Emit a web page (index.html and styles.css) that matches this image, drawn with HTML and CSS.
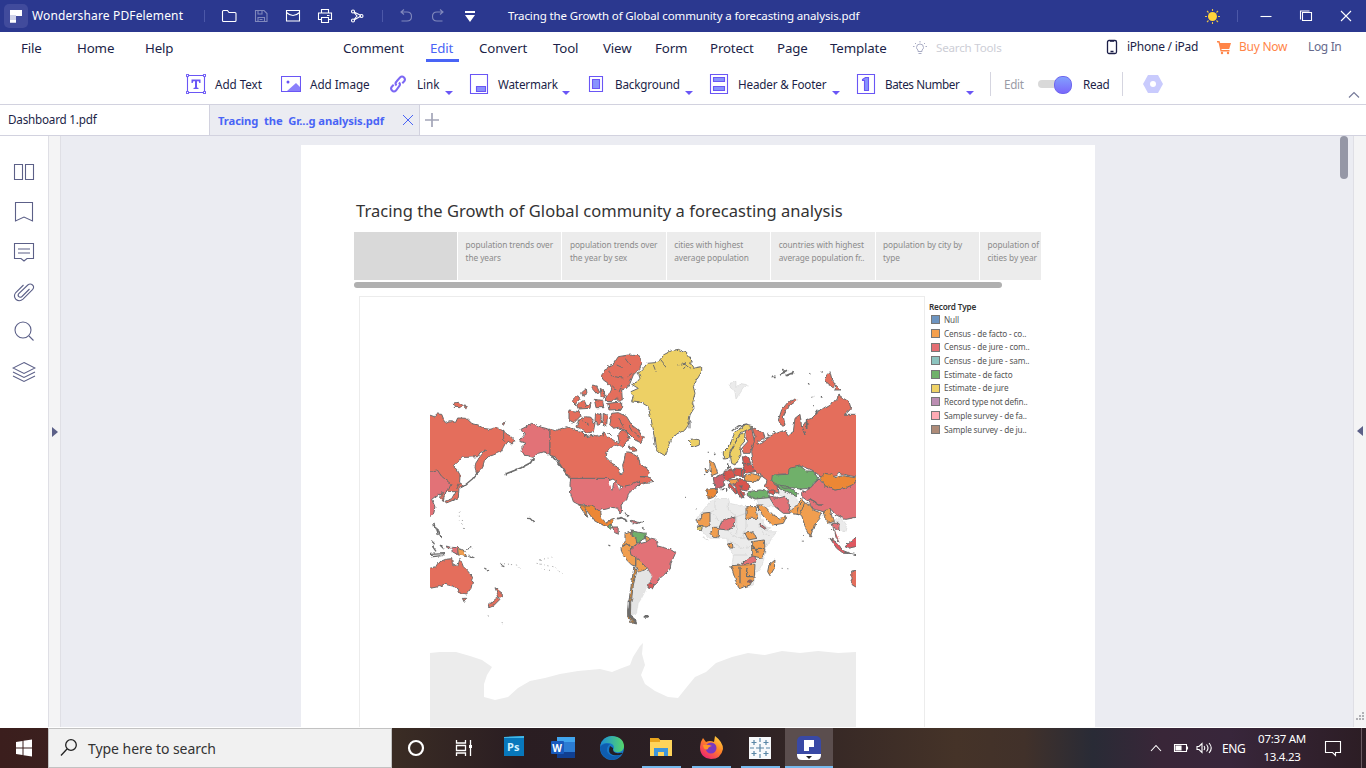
FILE: index.html
```html
<!DOCTYPE html>
<html lang="en">
<head>
<meta charset="utf-8">
<title>Wondershare PDFelement</title>
<link rel="stylesheet" href="styles.css">
</head>
<body>
<header class="titlebar">
  <svg class="logo" viewBox="0 0 24 24"><rect width="24" height="24" rx="5" fill="#414b9c"/><path d="M6 6h12v6H6z" fill="#fff"/><path d="M6 12h6v6.500H6z" fill="#fff"/><path d="M6 11h6v5H6z" fill="#cfd2e8"/><path d="M6 16h6v2.500H6z" fill="#fff"/></svg>
  <span class="brand">Wondershare PDFelement</span>
  <i class="sep"></i>
  <svg class="ti" viewBox="0 0 32 32"><path d="M9.500 11.500q0-1 1-1h4l1.500 2h6q1 0 1 1v7q0 1-1 1h-11.500q-1 0-1-1z"/></svg>
  <svg class="ti dim" viewBox="0 0 32 32"><path d="M10.500 10.500h8.500l3 3v8h-11.500zM13 10.500v3.500h4v-3.500M13 21.500v-4h6.500v4M14.500 19.500h3"/></svg>
  <svg class="ti" viewBox="0 0 32 32"><path d="M9.500 10.500h13v10.500h-13zM9.500 12.500q6.500 6 13 0"/></svg>
  <svg class="ti" viewBox="0 0 32 32"><path d="M12.500 13v-3.500h7V13M12 19.500H9.500v-6.500h13v6.500H20M12.500 17.500h7v5h-7zM18 15.500h2.500"/></svg>
  <svg class="ti" viewBox="0 0 32 32"><path d="M13 12l7 3.500M13 20l7-4M13 12.500l3 3.500-3 3.500"/><circle cx="12" cy="11.500" r="1.500"/><circle cx="12" cy="20.500" r="1.500"/><circle cx="20.500" cy="16" r="1.500"/></svg>
  <i class="sep s2"></i>
  <svg class="ti dim" viewBox="0 0 32 32"><path d="M14 9.500l-3 2.500 3 2.500M11 12h6q4.500 0 4.500 4.500t-4.500 4.500h-5.500"/></svg>
  <svg class="ti dim" viewBox="0 0 32 32"><path d="M18 9.500l3 2.500-3 2.500M21 12h-6q-4.500 0-4.500 4.500t4.500 4.500h5.500"/></svg>
  <svg class="ti" viewBox="0 0 32 32"><path d="M11 11h10v2H11zM11 15h10l-5 7z" fill="#fff" stroke="none"/></svg>
  <span class="doc">Tracing the Growth of Global community a forecasting analysis.pdf</span>
  <svg class="ti" viewBox="0 0 32 32"><circle cx="16.500" cy="16.500" r="4.500" fill="#ffd43b" stroke="none"/><path d="M16.500 9v2M16.500 22v2M9 16.500h2M22 16.500h2M11 11l1.500 1.500M22 11l-1.500 1.500M11 22l1.500-1.500M22 22l-1.500-1.500" stroke="#e8c24a"/></svg>
  <i class="sep s2"></i>
  <svg class="win" viewBox="0 0 40 32"><path d="M14.500 16.500h11"/></svg>
  <svg class="win" viewBox="0 0 40 32"><path d="M16.500 12.500h9v8h-9zM14.500 19.500v-8.500h9"/></svg>
  <svg class="win" viewBox="0 0 40 32"><path d="M15 11l10 10M25 11l-10 10"/></svg>
</header>

<nav class="menu">
  <span>File</span><span>Home</span><span>Help</span><span>Comment</span><span class="active">Edit</span><span>Convert</span><span>Tool</span><span>View</span><span>Form</span><span>Protect</span><span>Page</span><span>Template</span>
  <svg viewBox="0 0 16 16" class="bulb"><path d="M6 11.500V10q-1.500-1-1.500-2.500a3.500 3.500 0 0 1 7 0Q11.500 9 10 10v1.500zM6.500 13.500h3M8 1v1.500M3 3l1 1M13 3l-1 1M1 6.500h1.500M13.500 6.500H15"/></svg>
  <span class="search">Search Tools</span>
  <svg viewBox="0 0 12 16" class="phone"><rect x="1.500" y="1.500" width="9" height="13" rx="1.500"/><path d="M4 2h4M4.500 12.500h3"/></svg>
  <span class="small">iPhone / iPad</span>
  <svg viewBox="0 0 15 15" class="cart"><path d="M0 1h2.500l.7 2H14l-1.800 6H4.500v1h8v1.500H3.500L3 9 1.500 2.500H0z"/><circle cx="5" cy="13" r="1.200"/><circle cx="11" cy="13" r="1.200"/></svg>
  <span class="small buy">Buy Now</span>
  <span class="small login">Log In</span>
</nav>

<section class="tools">
  <svg viewBox="0 0 20 20" class="tool-icon"><path d="M1.500 1.500h17v17h-17z"/><path d="M5.500 5.500h9V9h-1.200l-.6-1.800H11v6.300l1.500.5v1h-5v-1l1.500-.5V7.200H7.300L6.700 9H5.500z" fill="#6a56f5" stroke="none"/><g fill="#fff"><circle cx="1.500" cy="1.500" r="1.200"/><circle cx="18.500" cy="1.500" r="1.200"/><circle cx="1.500" cy="18.500" r="1.200"/><circle cx="18.500" cy="18.500" r="1.200"/></g></svg>
  <span>Add Text</span>
  <svg viewBox="0 0 20 20" class="tool-icon"><path d="M.5 2.500h19v15H.5z"/><path d="M6 17l9-8 4 4v4z" fill="#8a80fb" stroke="none"/><circle cx="7" cy="8" r="1.500" fill="#6a56f5" stroke="none"/></svg>
  <span>Add Image</span>
  <svg viewBox="0 0 20 20" class="tool-icon link"><path d="M8.500 11.500q-2-2 0-4l3.500-4q2-2 4 0t0 4l-1.700 1.700M11 8.500q2 2 0 4l-3 4q-2 2-4 0t0-4l1.700-1.700"/></svg>
  <span>Link</span><b class="arrow"></b>
  <svg viewBox="0 0 20 20" class="tool-icon"><path d="M1.500.5h17v19h-17z"/><path d="M7.500 12.500h9v5h-9z" fill="#8a90fb"/></svg>
  <span class="tight">Watermark</span><b class="arrow"></b>
  <svg viewBox="0 0 20 20" class="tool-icon"><path d="M4.500 2.500h13v15h-13z"/><path d="M7.500 5.500h7v9h-7z" fill="#8793fd"/></svg>
  <span class="tight">Background</span><b class="arrow"></b>
  <svg viewBox="0 0 20 20" class="tool-icon"><path d="M1.500.5h17v19h-17z"/><path d="M4.500 3.500h11v4h-11zM4.500 12.500h11v4h-11z" fill="#8793fd"/></svg>
  <span class="tight">Header &amp; Footer</span><b class="arrow"></b>
  <svg viewBox="0 0 20 20" class="tool-icon"><path d="M1.500.5h17v19h-17z"/><path d="M6.500 5.500l3-2h3v13h-4v-10h-2z" fill="#8793fd"/></svg>
  <span class="tighter">Bates Number</span><b class="arrow"></b>
  <i class="bar"></i>
  <span class="off">Edit</span>
  <span class="switch"></span>
  <span class="read">Read</span>
  <i class="bar"></i>
  <svg viewBox="0 0 20 20" class="hex"><path d="M5 1h10l5 9-5 9H5l-5-9z" fill="#c9cbfd"/><circle cx="10" cy="10" r="3" fill="#fff"/></svg>
  <svg viewBox="0 0 12 12" class="fold"><path d="M1 8.500l5-5 5 5"/></svg>
</section>

<section class="tabs">
  <div class="tab">Dashboard 1.pdf</div>
  <div class="tab current"><span>Tracing&nbsp; the&nbsp; Gr...g analysis.pdf</span><svg viewBox="0 0 12 12"><path d="M1 1l10 10M11 1L1 11"/></svg></div>
  <svg class="plus" viewBox="0 0 16 16"><path d="M8 1v14M1 8h14"/></svg>
</section>

<main class="work">
  <aside class="side">
    <svg viewBox="0 0 24 24"><path d="M2.500 4.500h8v15h-8zM13.500 4.500h8v15h-8z"/></svg>
    <svg viewBox="0 0 24 24"><path d="M3.500 2.500h17v18.500L12 17l-8.500 4z"/></svg>
    <svg viewBox="0 0 24 24"><path d="M2.500 3.500h19v15H15l-3 2.500-3-2.500H2.500zM6 9h12M6 13h12"/></svg>
    <svg viewBox="0 0 24 24"><path d="M17.500 9l-7.500 7.500q-1.800 1.500-3.200.2t0-3.200l9-8.500q2.500-2 4.700 0t0 4.700l-9.500 9.500q-3.500 3-7 .3-3-3.500-.2-7L11.500 5"/></svg>
    <svg viewBox="0 0 24 24"><circle cx="11" cy="10" r="8"/><path d="M17 16l4.500 4.500"/></svg>
    <svg viewBox="0 0 24 24"><path d="M12 2.500L23 8l-11 5.500L1 8zM1 12l11 5.500L23 12M1 16l11 5.500L23 16"/></svg>
  </aside>
  <div class="strip left"><b></b></div>
  <div class="canvas">
    <article class="page">
      <h1>Tracing the Growth of Global community a forecasting analysis</h1>
      <div class="story">
        <div class="first"></div><div>population trends over<br>the years</div><div>population trends over<br>the year by sex</div><div>cities with highest<br>average population</div><div>countries with highest<br>average population fr..</div><div>population by city by<br>type</div><div>population of<br>cities by year</div>
      </div>
      <div class="hscroll"></div>
      <div class="viz">
        <div class="frame">
<svg class="map" viewBox="430 297 426 431">
<defs><filter id="coast" x="-5%" y="-5%" width="110%" height="110%"><feTurbulence type="fractalNoise" baseFrequency=".22" numOctaves="2" seed="4"/><feDisplacementMap in="SourceGraphic" scale="3.400" xChannelSelector="R" yChannelSelector="G"/></filter></defs>
<path fill="#ececec" d="M430 653L440 652 456 652 470 656 482 660 492 667 487 675 484 684 484 697 495 700 508 697 518 688 530 681 545 678 560 674 578 671 600 669 612 672 622 668 630 665 633 657 640 646 643 643 642 654 645 665 641 675 645 684 655 691 668 697 678 698 686 688 695 677 706 672 716 663 732 657 748 653 765 655 782 651 800 653 818 651 838 653 856 652V729H430z"/>
<g filter="url(#coast)" stroke="#6c6c6c" stroke-width="3" stroke-linejoin="round">
<g transform="translate(425 340) scale(.33333)">
<path fill="#e46e5c" d="M5 222l23 8 7-8 15 1 5 12 7 15 13-5 17 2 6-13 27 1 15 15 20 5 15 10 20 3 20-5 20 7 5 8 15 10 15 12-8 12-14-9-8 9-5 10-7 13-23 10-15 5-12 12-6 23-17 17-5-17 2-15 13-20 17-20-17 8-7 12-28 2-20 0-25 28 12 10 8 15-2 40-13 10-20 0-60-10zM85 190l15-3 13 8-8 8-18-1zM116 198l14 2-8 6zM232 249l12-2-8 6z"/>
<path fill="none" d="M236 270v35"/>
<path fill="#e27277" d="M5 398l20-6 12-2 12 18 14 12 15 12-7 17-16 15-15-1-20 15 10 22-5 22-20 15z"/>
<path fill="#e46e5c" d="M50 455l8 12-3 18-8-10zM103 430l14 10-15 5-2 28-14 7-22 9-4-5 20-8 10-18z"/>
<path fill="#e27277" d="M375 268l-25-6-30-12-20 12-12 6 10 17-15 18 20 7-13 10 2 15 6 10 27 7 15-12 15-5 20 8z"/>
<path fill="none" d="M325 354l-8 14-30 16-45 18M380 347l30 35 28 38" stroke-width="5"/>
<path fill="#e46e5c" d="M375 268L392 272 425 260 440 268 470 275 485 290 505 285 520 290 540 280 550 292 568 302 583 308 578 285 590 270 606 275 612 295 600 312 590 322 575 316 560 322 543 335 541 350 560 370 578 378 582 398 590 402 596 395 593 375 598 360 602 335 618 338 640 352 645 372 665 385 675 402 668 410 645 410 672 412 686 425 665 427 650 430 640 440 625 436 610 448 595 440 575 435 565 425 545 416 437 416 420 395 405 372 390 350 375 346z"/>
<path fill="#e46e5c" d="M530 105l20-25 15-8 15-22 30-5 30 2 12 18-7 20-20 20-10 25-10 15-15 5 2 30-52 2 10-22 10-10-10-20-15-10zM432 210l30 5 3 15-18 18-15-8zM460 240l20-10 18 2 12 18-5 25-20 5-20-15-12-5zM560 220l20-2 25 12 15 25 20 15 15 25-8 13-17-8-15-15-15-15-20-8-15 3-10-15zM548 190l42-4 0 22-38 2zM440 185l18-18 7 8-15 20zM455 195l22-15 8 18 13-8-3 15-35 2zM470 158l14-12 2 15-12 8zM503 135l12 4 9 18-8 6-15-18zM526 145l12 8 2 20-12-5zM508 178l24 3 5 22-24 0zM512 220l16 4 2 26-12 6-8-14zM535 220l12 6-2 35-12-6zM610 318l18 4 10 10-16 2z"/>
<path fill="none" d="M550 92l15 18 30 4M575 75l18 8M600 55l15 20M590 135l-8 22M620 100l-12 10M560 135l18 20M475 242l18 15M580 235l15 25M610 255l12 20M628 275l14 18M535 275l0 14M550 277l10 10M580 172l-10 10"/>
<path fill="#edd065" d="M620 133l17-8 8-10-5-15 15-15 12-15 23-2 15-8 10-15 25-13 20-4 23 10 17 22-3 12 8 13 25-5v15l-15 25-10 20 5 20-7 25 4 20-12 20-5 30-10 15-25 12-20 23-8 25-7 17-20-12-10-20-3-30-4-25-6-25-7-35-25-15-25-2 5-13-7-15 22-10zM790 300l15-3 18 3v15l-18 7-10-10z"/>
<path fill="none" d="M685 75l8 20M708 60l16 20M760 75l20-5 18 15M785 75l-10 12M785 250l10-5 0 20M800 190l8 8"/>
</g>
<g transform="translate(425 470) scale(.33333)">
<path fill="#e27277" d="M437 25h113l10 10 15 5 10 20 15-12 15-3 25-12 5 10-18 12-17 17-5 18-17 15 2 20-5 7-7-17-18-3-15 5-15 3-2 5-23-10-15-7-15-3-15-2-15-8-8-25-2-25z"/>
<path fill="#fff" d="M552 32l12-5 12 8-10 5-5 22M575 40l12 8-3 14" stroke-width="3"/>
<path fill="#ec8735" d="M460 103l15 5 25 0 27 17 3 20 15 15 7-10 16-5-6 13-14 12-23-8-20-12-10-15-15-20 5 15 3 12-13-17z"/>
<path fill="#6fb06a" d="M548 170l10-8 5 10-7 6z"/><path fill="#e27277" d="M562 171l17 0 1 22-12-9zM619 151l8 2 14 5-5 3-15-3z"/>
<path fill="none" stroke-width="5" d="M575 146l14-3 20 9M596 125l6 8 10 8M640 158h14M655 172l3 4"/>
<path fill="#f09e50" d="M600 190l20-7 2 17 13 5 2 15-15 12-4 18 14 12 0 26-12-3-15-15-15-25-2-13 12-17zM633 262l22 16 13 14-8 8-20 7-8-17zM660 196l14 9 3 13-12 0z"/><path fill="none" d="M590 232l15-10 15 10 3 18M602 220l20 12"/>
<path fill="#6fb06a" d="M620 183l40 7 2 15-14 5-3 10-10-2-2-13-11-5z"/>
<path fill="#e27277" d="M615 240l22-18 25-5 17-12 14 3 5 20 37 10 17 10-14 32-3 18-30 27-15 20-15-5 5-20-12-25-13-15-20-18-17-7z"/><path fill="#d95656" d="M670 338l18 6-6 13-13-3z"/>
<path fill="#e4e4e4" stroke="#d4d4d4" stroke-width="1" d="M637 308l31-8 14 18-14 27-8 20-10 20-10 15-5 30-13 5-4-35 10-60z"/>
<path fill="#cf883c" d="M627 290l8 15-10 40-5 40-3 15 0 30 18 32-15-4-12-18 0-20 10-70z"/>
<path fill="none" stroke-width="8" d="M612 395l0 35 12 22 10 7M656 439l14 0"/>
<path fill="#e46e5c" d="M5 297l30-7 10-15 17-7 18-2 2 14 16 10 7-25 10 25 15 15 15 20-7 30-13 17-20-4-10-13-13-7-22-5-20 7-35 7zM112 385l13 0-7 12zM210 353l22 17 0 8-10 5-4-10zM190 405l28-23 7 6-20 20-13 5z"/>
<path fill="#e27277" d="M80 232l18 1 2 22-18-10zM64 228l12 4-8 5z"/><path fill="#f09e50" d="M98 235l17 5 10 20-25-5z"/>
<path fill="none" stroke-width="4" d="M20 210l8 8-5 12 10 14M26 158l4 18 12 8 6 20M35 175l5 20M15 253l45-2M20 260l30-3M45 225l12 12M122 238l20-5M130 255l15 8M306 145l10 1 10 10M550 225l6 3M160 5l-18 22-30 25M178 294l14 9M228 286l10 4M1025 75l18 7"/>
<path fill="none" stroke-width="2" stroke-dasharray="3 9" d="M112 150l4 30M225 280l50 5 10 15M335 280l50 10 35 28M345 298l35 4M188 435l5 5M230 458h5M345 270l40-10M103 125v30"/>
</g>
<g transform="translate(685 355) scale(.33333)">
<path fill="#ebebeb" stroke="#cfcfcf" stroke-width="1.500" d="M75 440l25-10 30 0 5 15 40 10 40 0 15 35 20 40 25 0-25 35-10 25-5 30-10 20-15 20-5 30-40 10-25-60 5-40-15-30-5-20-50 0-35-30-5-30 20-25zM215 430l45 0 8 25-25 0-20 0zM305 410l30 15 5 30-22 15-15-40-40-20 12-20zM445 495l25-5 15 20-5 20-15-5zM135 85l18-6 0 18 12-12 25 5-15 10-8 12-14 20-4-25-12-8zM240 515l20 5-15 8zM70 555l-15-10z"/>
<path fill="none" stroke="#cfcfcf" stroke-width="2" d="M90 440v25l-30 15M75 472l35 30M130 435v30l25 20 28-10M183 490v30l-10 25 25 10M155 485l0 50M130 530l30 20 20 0M145 600l40 0M220 510l15 25 20 5M95 525l0 25M145 560l20 20 30-5"/>
<path fill="#e46e5c" d="M203 310l-3-20 5-25 5-20-10-30 35 20 5 15-20 8-5 10 15-6 32-22 38-15 10 15 15-10 5-40 15-12 5 37 10 25-8-25 13-20 15-5 10-10 25-20 25-15 15-10 7-15 13 10 17 10 6 20-8 10-12 8h55V370l-72-15-5 7-40 10-15-12-20-15-25-10-25 7-10 13-40 3-12 12 7 20 3 25-23-10-15-10 5-20-20-15-20-15-5-20z"/>
<path fill="#e46e5c" d="M280 195l10-30 20-25 25-10v7l-25 18-15 30 5 25-12 0zM425 60l10-10 5 20 10 15-5 13-15-8-12-15zM452 90l16 15-18 0zM180 225l20-5 8 40-13 35-20 0-5-15 18-20zM248 235l6 4-4 5zM266 228l5 5-5 2zM500 648l20-3v55l-18-10z"/>
<path fill="none" stroke-width="5" d="M258 64l14 0M292 42l6 8 8-4M285 60l15-5M302 62l20-8M325 48l-4 10M376 55l2 2M410 50l3 2M372 85l3 2M385 125v5M384 150v4M410 123v5M365 190v35M400 165l-8 12"/>
<path fill="#6fb06a" d="M262 360l48-2 2-18 33-7 20 15 20 0 15 24-15 13-5 15-35 2-25-4-20 2-15-10-15 0-10-15zM275 392l25 0 25 13 15 10-5 10-25-13-25-10zM190 410l35-5 27 5v18l-42 4-20-10z"/>
<path fill="#e27277" d="M350 415l25-15 27-28 18 20 30 13 30-5 40-25v110l-40 8-30-15-10-13-25 5-30-8-13-22-22-15zM252 425l23 5 25-5 12 15 3 35-20 0-25-20zM110 500l25-10 15-5-2 30-18 10-30-3zM172 625l18-15 20-10 2 20-27 13zM442 505l20 0 0 20-17-5zM225 505l18 15-3 3-15-10z"/>
<path fill="#df5960" d="M435 550l20 12 20 25 20 8-20 0-20-15zM480 575l35-30v30l-25 5zM448 522l5 25 10 12M478 592l36 7"/>
<path fill="#ec8735" d="M405 370l15-15 20 3 10 10 25-6 45 8-15 18-25 12-30 5-30-13zM65 402l33-2-6 25-22 7z"/>
<path fill="#f09e50" d="M355 440l20 10 10 15 25 10-5 15-17 20-10 30-10-5-18-50-15-10 5-20zM315 470l20-20 15-18 8 13-13 35-25-5zM375 537l6 8-7 0zM415 470l20-8 10 38-15 5-10-15zM215 450l20 0 30 30 20 10 20-5-10 20-30 5-20-15-17-20zM183 455l30 0 5 35-35 0zM35 495l15-5 0-15 25-3 0 40-35 3zM75 535l10-18 15 0 0 30-15 0zM180 535l25-5 10 20-25 5zM200 560l38-5 2 25-8 30-32-8zM137 632l73-4-2 37-13 25-30 10-10-15zM127 567l15-3 2 15-10 0zM270 615l-2 25-13 22-7-12 4-20zM178 365l22-10 30 10-5 10-20 5-25-2zM75 315l13 10 10 30-18 7-5-17zM60 340l12 5-7 12zM125 375l30-2 10 10-25 5z"/>
<path fill="#edd065" d="M115 290l20-20 15-40 30-20 23 5-18 10-20 10-15 30-15 25-3 20-17 2zM180 235l-2 25-13 15 3 25-18 30-10-5-5-30 15-30 15-28zM37 515h14l0 8-12 0z"/>
<path fill="#cf606b" d="M85 370l33-15 2 20-5 20-25 3z"/>
<path fill="#d8544e" d="M118 345l27 0 5 20-25 10-10-10zM148 340l30 0 0 25-28-3zM180 325l20 5 10 20-30 5-5-15zM172 305l20 3 5 18-22 0zM130 385l10 5 18 22-6 5-12-15-10-8zM148 388l15-15 20 5 12 15-10 15-20-5 15 15-10 12-12-15zM248 405l22 0-2 16-15-8z"/>
<path fill="none" d="M128 325l0 15 10-5M125 398l0 15M162 390l10 10M165 410l12 20M110 405l8-4M170 345l0 20M200 580l38 0M200 570l20 20M165 635l0 50M185 640l0 25 20 0M345 402l15 10M370 430l30 20 15 0M140 228l20-15 30-6M60 360l-2-3M70 290v3M88 300l3-4" stroke-width="4"/>
<circle cx="194" cy="679" r="4" fill="#9d5555"/>
<path fill="none" stroke-width="3" stroke-dasharray="3 14" d="M290 640l30 2M355 540v30M32 465l14-2M0 427h6M440 525l-2-20"/>
</g>
</g>
</svg>
        </div>
        <div class="legend">
          <strong>Record Type</strong>
          <div><i class="c1"></i>Null</div><div><i class="c2"></i>Census - de facto - co..</div><div><i class="c3"></i>Census - de jure - com..</div><div><i class="c4"></i>Census - de jure - sam..</div><div><i class="c5"></i>Estimate - de facto</div><div><i class="c6"></i>Estimate - de jure</div><div><i class="c7"></i>Record type not defin..</div><div><i class="c8"></i>Sample survey - de fa..</div><div><i class="c9"></i>Sample survey - de ju..</div>
        </div>
      </div>
    </article>
  </div>
  <div class="vscroll"><i></i></div>
  <div class="strip right"><b></b><svg viewBox="0 0 9 9"><path d="M6 0h2v2H6zM3 3h2v2H3zM6 3h2v2H6zM0 6h2v2H0zM3 6h2v2H3zM6 6h2v2H6z"/></svg></div>
</main>

<footer class="taskbar">
  <svg class="start" viewBox="0 0 48 40"><path d="M16 14l6.500-1v6.500H16zM23.500 12.800L32 11.500v8h-8.500zM16 20.500h6.500V27L16 26zM23.500 20.500H32v8l-8.500-1.200z" fill="#fff"/></svg>
  <div class="find"><svg viewBox="0 0 20 20"><circle cx="12" cy="7" r="5.300"/><path d="M8 11l-6 6.500"/></svg><span>Type here to search</span></div>
  <svg class="app" viewBox="0 0 48 40"><circle cx="24" cy="20" r="7" fill="none" stroke="#fff" stroke-width="2.200"/></svg>
  <svg class="app" viewBox="0 0 48 40"><path d="M15.500 12v3h9v-3M15.500 28v-3h9v3M15.500 17.500v5h9v-5zM29.500 12v16" fill="none" stroke="#fff" stroke-width="1.300"/><path d="M28 17h3v3h-3z" fill="#fff"/></svg>
  <svg class="app ps" viewBox="0 0 48 40"><path d="M14 9l20-1v20H14z" fill="#0878bc"/><path d="M14 9l20-1v2H14z" fill="#42b8e8"/><text x="17" y="23" font-size="11" font-weight="700" fill="#d4f2ff">Ps</text></svg>
  <svg class="app" viewBox="0 0 48 40"><rect x="18" y="9" width="18" height="21" rx="1.500" fill="#2b7cd3"/><path d="M18 9h18v5H18z" fill="#41a5ee"/><path d="M18 24h18v6H18z" fill="#103f91"/><rect x="12" y="13" width="13" height="13" rx="1" fill="#185abd"/><text x="13.200" y="23.500" font-size="10" font-weight="700" fill="#fff">W</text></svg>
  <svg class="app" viewBox="0 0 48 40"><defs><linearGradient id="e1"><stop stop-color="#1b8ed8"/><stop offset="1" stop-color="#55d66b"/></linearGradient></defs><circle cx="24" cy="20" r="12" fill="#1678c9"/><path d="M12 18Q15 8 24 8q12 1 12 11-1 6-8 5-4-1-2-4 0-5-7-5-5 0-7 3z" fill="url(#e1)"/><path d="M12 19q4-5 10-3-5 4-2 9 4 5 13 2-7 8-15 3-6-4-6-11z" fill="#0f5daf"/><path d="M22 18q-3 7 3 9 6 1 9-1 2-2-2-1-8 1-7-5z" fill="#241e26"/></svg>
  <svg class="app open" viewBox="0 0 48 40"><path d="M13 10h8l2 2h12v16H13z" fill="#ffd45a"/><path d="M13 10h8l2 2v2H13z" fill="#e9a51d"/><path d="M17 20h14v8h-4v-4h-6v4h-4z" fill="#3f95da"/></svg>
  <svg class="app open" viewBox="0 0 48 40"><defs><linearGradient id="fx" x1="1" y1="0" x2=".3" y2="1"><stop stop-color="#ffe343"/><stop offset=".5" stop-color="#ff8427"/><stop offset="1" stop-color="#ee2670"/></linearGradient></defs><path d="M16 10l3 4q4-2 8 0l1-6q8 6 8 13-2 10-12 10-11-1-11-12 0-5 3-9z" fill="url(#fx)"/><circle cx="24" cy="20" r="5.500" fill="#7b39c0"/><path d="M16 17q5-1 9 1-4 1-4 3-4 2-5-4z" fill="#ff9528"/></svg>
  <svg class="app open" viewBox="0 0 48 40"><path d="M13 9h22v22H13z" fill="#f7f9fb"/><path d="M24 16v8M20 20h8M18 12v5M15.500 14.500h5M30 12v5M27.500 14.500h5M18 23v5M15.500 25.500h5M30 23v5M27.500 25.500h5M24 10v4M24 26v4M14 20h4M30 20h4" stroke="#5986a6" stroke-width="1.200"/></svg>
  <svg class="app now" viewBox="0 0 48 40"><rect x="12" y="8" width="24" height="24" rx="5" fill="#3949a5"/><path d="M12 26h24v1q0 5-5 5H17q-5 0-5-5z" fill="#fff"/><path d="M19 12h10v7h-5v4h-5z" fill="#fff"/><path d="M21 28h6l-3 3z" fill="#222"/></svg>
  <div class="tray">
    <svg viewBox="0 0 70 20"><path d="M7 13l5-5.500 5 5.500M30.500 6.500h12v7h-12zM43.500 8.500v3"/><path d="M32 8h5v4h-5z" fill="#fff"/><path d="M53 8.500h2l3-3v9l-3-3h-2zM60 8q1.500 2 0 4M62.500 6.500q3 3.500 0 7M65 5q4.500 5 0 10"/></svg>
    <span class="eng">ENG</span>
    <div class="clock">07:37 AM<br>13.4.23</div>
    <svg class="note" viewBox="0 0 18 18"><path d="M1.500 2.500h15v11h-5v3l-3-3h-7z"/></svg>
    <i></i>
  </div>
</footer>
</body>
</html>
```
FILE: styles.css
```css
* { box-sizing: border-box; }
body { margin: 0; width: 1366px; height: 768px; overflow: hidden; background: #fff; font-family: "Noto Sans", "Open Sans", sans-serif; color: #1c1f48; white-space: nowrap; }
svg { display: block; fill: none; }

.titlebar { height: 32px; background: #2b388f; color: #fff; display: grid; align-items: center; grid-template-columns: 28px 172px 9px repeat(5, 32px) 17px repeat(3, 32px) 710px 32px 18px 40px 40px 40px; padding-left: 4px; font-size: 12px; }
.logo { width: 24px; height: 24px; }
.brand { letter-spacing: .15px; margin-top: -1px; }
.doc { padding-left: 22px; font-size: 11.500px; letter-spacing: -.12px; margin-top: -1px; }
.sep { width: 1px; height: 12px; background: #4c58a8; }
.s2 { margin-left: 9px; }
.ti, .win { height: 32px; width: 100%; stroke: #fff; stroke-width: 1.100; }
.dim { opacity: .4; }

.menu { height: 32px; display: grid; align-items: center; padding-left: 21px; font-size: 13.300px; letter-spacing: -.15px; grid-template-columns: 56px 68px 198px 87px 49px 74px 50px 52px 55px 67px 53px 83px 23px 170px 21px 90px 22px 69px 40px; }
.menu > span { line-height: 28px; }
.menu .active { color: #4964f6; margin: 0 12px 0 -4px; padding-left: 4px; border-bottom: 3px solid #4964f6; padding-top: 3px; line-height: 26px; width: 33px; height: 30px; align-self: start; }
.menu .search { font-size: 11.600px; color: #cdced6; letter-spacing: -.2px; }
.bulb { width: 16px; height: 16px; stroke: #a9acc4; margin-left: -1px; }
.phone { width: 12px; height: 16px; stroke: #1c1f48; margin-top: -2px; stroke-width: 1.300; }
.cart { width: 15px; height: 15px; fill: #ff8548; margin-top: -2px; }
.menu .small { font-size: 12px; letter-spacing: -.25px; margin-top: -3px; }
.menu .buy { color: #ff8548; }
.menu .login { color: #666a8c; letter-spacing: -.35px; }

.tools { height: 41px; border-bottom: 1px solid #d2d2df; display: grid; align-items: center; padding-left: 186px; font-size: 11.700px; letter-spacing: -.05px; grid-template-columns: 29px 66px 29px 78px 29px 28px 24px 29px 64px 23px 30px 70px 24px 29px 94px 24px 29px 81px 24px 14px 34px 45px 39px 21px 205px 12px; }
.tools span { margin-top: -1px; }
.tools .tight { letter-spacing: -.17px; }
.tools .tighter { letter-spacing: -.4px; }
.tool-icon { width: 20px; height: 20px; stroke: #6a56f5; stroke-width: 1.100; }
.link { stroke-width: 2; stroke: #7c68f4; }
.arrow { border: 4px solid transparent; border-top-color: #6a56f5; border-bottom: 0; width: 8px; margin-top: 18px; }
.bar { width: 1px; height: 24px; background: #d5d5e0; }
.tools .off { color: #9a9ba5; letter-spacing: -.3px; }
.tools .read { letter-spacing: -.3px; }
.tools .switch { margin: 0; width: 28px; height: 8px; border-radius: 4px; background: #d9d9d9; position: relative; }
.switch::after { content: ""; position: absolute; width: 16px; height: 16px; border-radius: 8px; left: 16px; top: -4px; background: linear-gradient(#82a0fe, #7a68fb); border: 1px solid #6f67ef; }
.hex { width: 20px; height: 20px; }
.fold { width: 12px; height: 12px; stroke: #777b9a; margin-top: 22px; stroke-width: 1.200; }

.tabs { height: 31px; border-bottom: 1px solid #d2d2df; display: flex; font-size: 11.700px; line-height: 29px; letter-spacing: -.22px; }
.tab { width: 209px; padding-left: 8px; }
.current { width: 211px; border: solid #d2d2df; border-width: 0 1px; background: #ebecf2; color: #4964f6; font-weight: 700; font-size: 11.200px; display: flex; align-items: center; letter-spacing: -.08px; }
.current span { width: 184px; }
.current svg { width: 12px; stroke: #4964f6; }
.plus { width: 16px; margin-left: 4px; stroke: #a3a5b8; stroke-width: 1.700; }

.work { height: 592px; display: grid; grid-template-columns: 48px 13px 1275px 17px 13px; border-bottom: 1px solid #fff; }
.side { padding: 24px 12px; display: flex; flex-direction: column; gap: 16px; }
.side svg { width: 24px; height: 24px; stroke: #5c6088; stroke-width: 1.100; }
.strip { background: #f4f4f5; border: solid #dfdfe5; border-width: 0 1px; display: flex; flex-direction: column; align-items: center; justify-content: center; }
.strip b { border: 5px solid transparent; border-left: 6px solid #5c6088; border-right: 0; }
.right { border-right: 0; padding-top: 3px; }
.right b { border-right: 6px solid #5c6088; border-left: 0; margin-top: 280px; }
.right svg { width: 9px; fill: #b0b0b5; margin-top: 276px; }
.canvas { background: #ebecf2; padding: 9px 0 0 240px; overflow: hidden; }
.vscroll { background: #ebecf2; padding-left: 4px; }
.vscroll i { display: block; width: 8px; height: 43px; border-radius: 4px; background: #9597a6; }
.page { background: #fff; width: 794px; height: 583px; padding: 54px 0 0 53px; overflow: hidden; color: #333; }
h1 { margin: 0 0 0 2px; font-weight: 400; font-size: 16.500px; line-height: 24px; height: 33px; letter-spacing: .03px; }
.story { display: grid; grid-template-columns: 103px repeat(5, 103.400px) 61px; gap: 1px; height: 48px; width: 687px; overflow: hidden; font-size: 8.300px; letter-spacing: -.07px; line-height: 12.500px; color: #8b8b8b; }
.story div { background: #ececec; padding: 7px 0 0 7.500px; overflow: hidden; }
.story .first { background: #d9d9d9; }
.hscroll { width: 648px; height: 6px; border-radius: 3px; margin: 1.500px 0 8.500px; background: #b0b0b0; }
.viz { display: flex; margin-left: 5px; }
.frame { width: 566px; height: 440px; border: 1px solid #ececec; padding-left: 70px; }
.map { width: 426px; height: 431px; overflow: hidden; }
.legend { padding: 5px 0 0 4px; font-size: 8.200px; line-height: 13.700px; color: #555; letter-spacing: -.15px; }
.legend strong { display: block; line-height: 12px; color: #333; font-weight: 600; }
.legend div { display: flex; align-items: center; gap: 4px; padding-left: 2px; height: 13.700px; }
.legend i { width: 9px; height: 9px; border: 1px solid #777; }
.c1 { background: #6d94c0; } .c2 { background: #f5a04d; } .c3 { background: #e46e73; } .c4 { background: #8cc4bf; } .c5 { background: #70b16a; } .c6 { background: #efd265; } .c7 { background: #bb8db2; } .c8 { background: #ffabb4; } .c9 { background: #ae8b78; }

.taskbar { height: 40px; display: grid; grid-template-columns: 48px 344px repeat(9, 49.100px) 1fr; color: #fff; background: linear-gradient(90deg, #3b1e1d 0, #3a2c24 29%, #2a1d22 38%, #2b2024 53%, #453328 70%, #41312a 75%, #292b36 80%, #392638 85%, #38263b 90%, #2c1d24 100%); }
.start { width: 48px; height: 40px; }
.find { background: #f1f1f1; border: 1px solid #c2c2c2; display: flex; align-items: center; color: #333; font-size: 14px; letter-spacing: -.05px; padding-left: 10px; }
.find svg { width: 20px; height: 20px; stroke: #222; stroke-width: 1.300; margin-right: 9px; }
.app { width: 48px; height: 40px; font-family: "Open Sans", sans-serif; }
.open { background: linear-gradient(#76b9ed, #76b9ed) 5px 38px / 39px 2px no-repeat; }
.now { background: linear-gradient(#76b9ed, #76b9ed) 0 38px / 48px 2px no-repeat, #5b4e4e; }
.tray { display: grid; grid-template-columns: 70px 38px 60px 49px 1px; align-items: center; justify-content: end; padding-right: 4px; font-size: 12px; }
.tray svg { width: 70px; height: 20px; stroke: #fff; stroke-width: 1.100; }
.eng { padding-left: 8px; letter-spacing: -.4px; }
.clock { text-align: center; line-height: 18px; font-size: 11.500px; letter-spacing: -.3px; }
.tray .note { width: 18px; height: 18px; margin-left: 12px; }
.tray i { height: 40px; background: #6a5a61; }
```
